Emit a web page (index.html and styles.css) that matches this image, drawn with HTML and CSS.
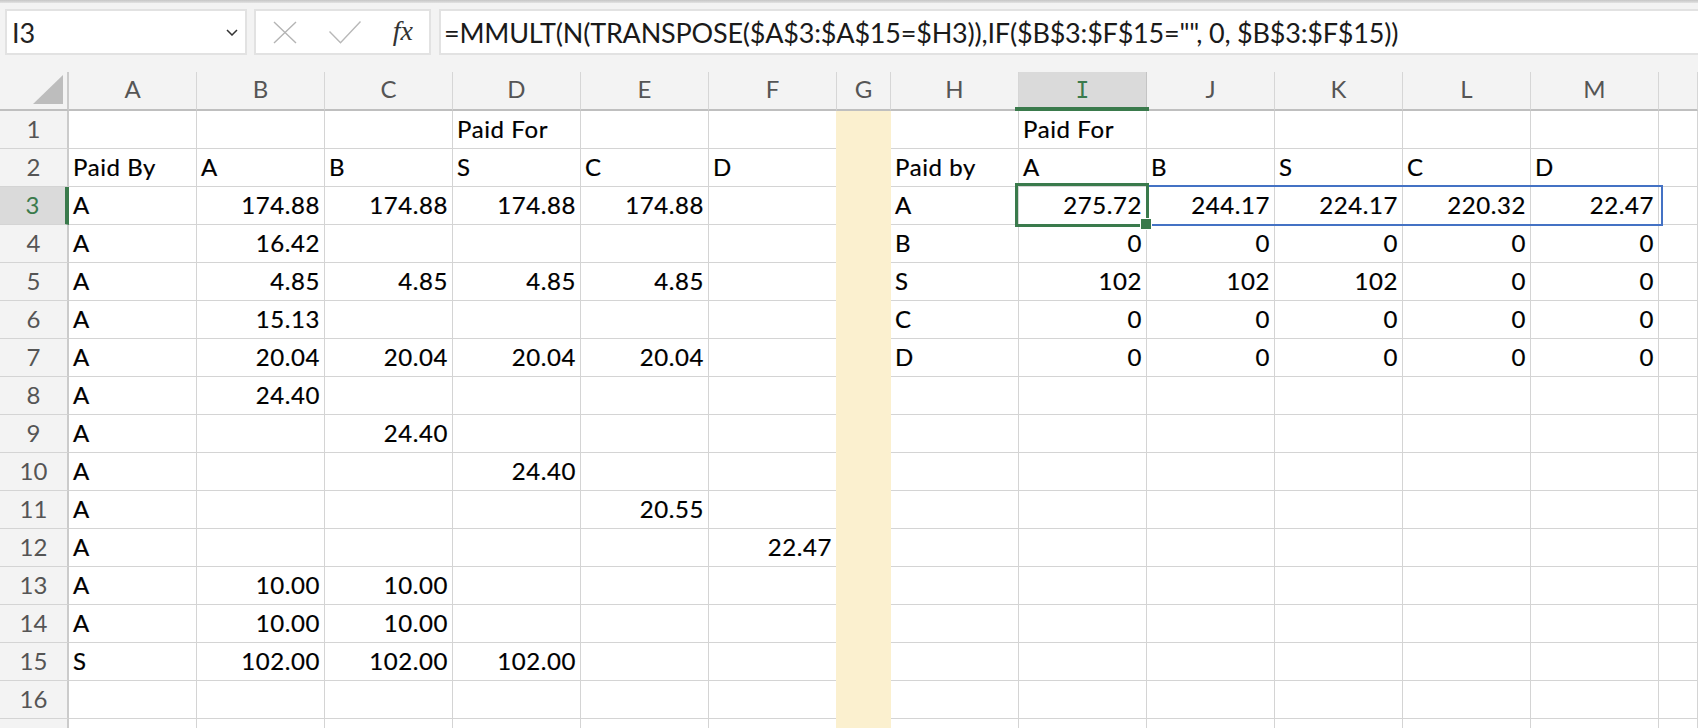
FILE: index.html
```html
<!DOCTYPE html>
<html lang="en">
<head>
<meta charset="utf-8">
<title>Sheet</title>
<link rel="stylesheet" href="styles.css">
</head>
<body>
<div class="toolbar">
  <div class="box namebox">
    <span class="ref">I3</span>
    <svg class="chev" width="12" height="7" viewBox="0 0 12 7"><polyline points="1,1 6,6 11,1" fill="none" stroke="#333" stroke-width="1.5"/></svg>
  </div>
  <div class="box tools">
    <svg width="24" height="23" viewBox="0 0 24 23"><path d="M1 1 L23 22 M23 1 L1 22" stroke="#b4b4b4" stroke-width="1.4" fill="none"/></svg>
    <svg width="32" height="23" viewBox="0 0 32 23"><polyline points="0.5,10.5 11.5,21.8 31.5,0.5" stroke="#b8b8b8" stroke-width="1.4" fill="none"/></svg>
    <span class="fx">fx</span>
  </div>
  <div class="box formula">=MMULT(N(TRANSPOSE($A$3:$A$15=$H3)),IF($B$3:$F$15="", 0, $B$3:$F$15))</div>
</div>

<div class="sheet">
  <div class="row hdr">
    <div class="corner"><svg width="30" height="29" viewBox="0 0 30 29"><polygon points="30,0 30,29 0,29" fill="#bdbdbd"/></svg></div>
    <div class="h">A</div><div class="h">B</div><div class="h">C</div><div class="h">D</div><div class="h">E</div><div class="h">F</div>
    <div class="h">G</div><div class="h">H</div><div class="h on"><span class="serif-i">I</span></div><div class="h">J</div><div class="h">K</div><div class="h">L</div><div class="h">M</div><div class="h"></div>
  </div>

  <div class="row">
    <div class="rh">1</div>
    <div class="c"></div><div class="c"></div><div class="c"></div><div class="c">Paid For</div><div class="c"></div><div class="c"></div>
    <div class="c g"></div>
    <div class="c"></div><div class="c">Paid For</div><div class="c"></div><div class="c"></div><div class="c"></div><div class="c"></div><div class="c"></div>
  </div>
  <div class="row">
    <div class="rh">2</div>
    <div class="c">Paid By</div><div class="c">A</div><div class="c">B</div><div class="c">S</div><div class="c">C</div><div class="c">D</div>
    <div class="c g"></div>
    <div class="c">Paid by</div><div class="c">A</div><div class="c">B</div><div class="c">S</div><div class="c">C</div><div class="c">D</div><div class="c"></div>
  </div>
  <div class="row">
    <div class="rh on">3</div>
    <div class="c">A</div><div class="c n">174.88</div><div class="c n">174.88</div><div class="c n">174.88</div><div class="c n">174.88</div><div class="c"></div>
    <div class="c g"></div>
    <div class="c">A</div><div class="c n sel">275.72</div><div class="c n rng">244.17</div><div class="c n">224.17</div><div class="c n">220.32</div><div class="c n">22.47</div><div class="c"></div>
  </div>
  <div class="row">
    <div class="rh">4</div>
    <div class="c">A</div><div class="c n">16.42</div><div class="c"></div><div class="c"></div><div class="c"></div><div class="c"></div>
    <div class="c g"></div>
    <div class="c">B</div><div class="c n">0</div><div class="c n">0</div><div class="c n">0</div><div class="c n">0</div><div class="c n">0</div><div class="c"></div>
  </div>
  <div class="row">
    <div class="rh">5</div>
    <div class="c">A</div><div class="c n">4.85</div><div class="c n">4.85</div><div class="c n">4.85</div><div class="c n">4.85</div><div class="c"></div>
    <div class="c g"></div>
    <div class="c">S</div><div class="c n">102</div><div class="c n">102</div><div class="c n">102</div><div class="c n">0</div><div class="c n">0</div><div class="c"></div>
  </div>
  <div class="row">
    <div class="rh">6</div>
    <div class="c">A</div><div class="c n">15.13</div><div class="c"></div><div class="c"></div><div class="c"></div><div class="c"></div>
    <div class="c g"></div>
    <div class="c">C</div><div class="c n">0</div><div class="c n">0</div><div class="c n">0</div><div class="c n">0</div><div class="c n">0</div><div class="c"></div>
  </div>
  <div class="row">
    <div class="rh">7</div>
    <div class="c">A</div><div class="c n">20.04</div><div class="c n">20.04</div><div class="c n">20.04</div><div class="c n">20.04</div><div class="c"></div>
    <div class="c g"></div>
    <div class="c">D</div><div class="c n">0</div><div class="c n">0</div><div class="c n">0</div><div class="c n">0</div><div class="c n">0</div><div class="c"></div>
  </div>
  <div class="row">
    <div class="rh">8</div>
    <div class="c">A</div><div class="c n">24.40</div><div class="c"></div><div class="c"></div><div class="c"></div><div class="c"></div>
    <div class="c g"></div>
    <div class="c"></div><div class="c"></div><div class="c"></div><div class="c"></div><div class="c"></div><div class="c"></div><div class="c"></div>
  </div>
  <div class="row">
    <div class="rh">9</div>
    <div class="c">A</div><div class="c"></div><div class="c n">24.40</div><div class="c"></div><div class="c"></div><div class="c"></div>
    <div class="c g"></div>
    <div class="c"></div><div class="c"></div><div class="c"></div><div class="c"></div><div class="c"></div><div class="c"></div><div class="c"></div>
  </div>
  <div class="row">
    <div class="rh">10</div>
    <div class="c">A</div><div class="c"></div><div class="c"></div><div class="c n">24.40</div><div class="c"></div><div class="c"></div>
    <div class="c g"></div>
    <div class="c"></div><div class="c"></div><div class="c"></div><div class="c"></div><div class="c"></div><div class="c"></div><div class="c"></div>
  </div>
  <div class="row">
    <div class="rh">11</div>
    <div class="c">A</div><div class="c"></div><div class="c"></div><div class="c"></div><div class="c n">20.55</div><div class="c"></div>
    <div class="c g"></div>
    <div class="c"></div><div class="c"></div><div class="c"></div><div class="c"></div><div class="c"></div><div class="c"></div><div class="c"></div>
  </div>
  <div class="row">
    <div class="rh">12</div>
    <div class="c">A</div><div class="c"></div><div class="c"></div><div class="c"></div><div class="c"></div><div class="c n">22.47</div>
    <div class="c g"></div>
    <div class="c"></div><div class="c"></div><div class="c"></div><div class="c"></div><div class="c"></div><div class="c"></div><div class="c"></div>
  </div>
  <div class="row">
    <div class="rh">13</div>
    <div class="c">A</div><div class="c n">10.00</div><div class="c n">10.00</div><div class="c"></div><div class="c"></div><div class="c"></div>
    <div class="c g"></div>
    <div class="c"></div><div class="c"></div><div class="c"></div><div class="c"></div><div class="c"></div><div class="c"></div><div class="c"></div>
  </div>
  <div class="row">
    <div class="rh">14</div>
    <div class="c">A</div><div class="c n">10.00</div><div class="c n">10.00</div><div class="c"></div><div class="c"></div><div class="c"></div>
    <div class="c g"></div>
    <div class="c"></div><div class="c"></div><div class="c"></div><div class="c"></div><div class="c"></div><div class="c"></div><div class="c"></div>
  </div>
  <div class="row">
    <div class="rh">15</div>
    <div class="c">S</div><div class="c n">102.00</div><div class="c n">102.00</div><div class="c n">102.00</div><div class="c"></div><div class="c"></div>
    <div class="c g"></div>
    <div class="c"></div><div class="c"></div><div class="c"></div><div class="c"></div><div class="c"></div><div class="c"></div><div class="c"></div>
  </div>
  <div class="row">
    <div class="rh">16</div>
    <div class="c"></div><div class="c"></div><div class="c"></div><div class="c"></div><div class="c"></div><div class="c"></div>
    <div class="c g"></div>
    <div class="c"></div><div class="c"></div><div class="c"></div><div class="c"></div><div class="c"></div><div class="c"></div><div class="c"></div>
  </div>
  <div class="row">
    <div class="rh">17</div>
    <div class="c"></div><div class="c"></div><div class="c"></div><div class="c"></div><div class="c"></div><div class="c"></div>
    <div class="c g"></div>
    <div class="c"></div><div class="c"></div><div class="c"></div><div class="c"></div><div class="c"></div><div class="c"></div><div class="c"></div>
  </div>
</div>
</body>
</html>
```

FILE: styles.css
```css
* { box-sizing: border-box; }

html, body {
  margin: 0;
  height: 728px;
  overflow: hidden;
  background: #fff;
}

body {
  font-family: Lato, "Open Sans", sans-serif;
  color: #000;
}

/* ---------- formula bar ---------- */
.toolbar {
  height: 72px;
  display: flex;
  align-items: flex-start;
  padding: 9px 0 0 5px;
  background: linear-gradient(#c6c6c6, #e2e2e2 3px, #f3f3f3 3px);
}

.box {
  height: 46px;
  background: #fff;
  border: 2px solid #e2e2e2;
  display: flex;
  align-items: center;
}

.namebox {
  width: 242px;
  padding: 0 7px 0 5px;
  justify-content: space-between;
}

.ref {
  font-size: 27px;
  color: #222;
}

.tools {
  width: 177px;
  margin-left: 7px;
  padding: 0 16px 0 17px;
  justify-content: space-between;
}

.fx {
  font-family: "Liberation Serif", "DejaVu Serif", serif;
  font-style: italic;
  font-size: 28px;
  color: #333;
  line-height: 1;
  margin-top: -2px;
}

.formula {
  flex: 1;
  margin-left: 8px;
  margin-right: -10px;
  padding-left: 3px;
  font-size: 27px;
  letter-spacing: -0.2px;
  color: #1a1a1a;
  white-space: nowrap;
  overflow: hidden;
}

/* ---------- grid ---------- */
.row {
  display: grid;
  grid-template-columns: 69px repeat(6, 128px) 54px repeat(6, 128px) 1fr;
  height: 38px;
}

.row.hdr {
  height: 39px;
  background: #f3f3f3;
}

.corner {
  display: flex;
  justify-content: flex-end;
  align-items: flex-end;
  padding: 0 4px 5px 0;
  border-right: 2px solid #cbcbcb;
  border-bottom: 2px solid #bfbfbf;
}

.h {
  border-right: 1px solid #d6d6d6;
  border-bottom: 2px solid #bfbfbf;
  text-align: center;
  color: #555;
  font-size: 24px;
  line-height: 33px;
}

.h.on {
  position: relative;
  background: #dadada;
  color: #3a7a4c;
  border-right-color: #c4c4c4;
}

.h.on::after {
  content: "";
  position: absolute;
  left: -4px;
  right: -3px;
  bottom: -2px;
  height: 4px;
  background: #3a7a4c;
}

.serif-i {
  font-family: "DejaVu Sans Mono", monospace;
  font-size: 23px;
}

.rh {
  background: #f3f3f3;
  border-right: 2px solid #cbcbcb;
  border-bottom: 1px solid #d4d4d4;
  text-align: center;
  color: #555;
  font-size: 24px;
  line-height: 35px;
}

.rh.on {
  background: #dadada;
  color: #3a7a4c;
  border-right: 4px solid #3a7a4c;
}

.c {
  border-right: 1px solid #d4d4d4;
  border-bottom: 1px solid #d4d4d4;
  padding: 0 4px 0 4px;
  font-size: 24px;
  line-height: 35px;
  letter-spacing: 0.6px;
  white-space: nowrap;
  -webkit-text-stroke: 0.2px #000;
}

.n { text-align: right; }

.g {
  background: #fbf0cf;
  border-color: #fbf0cf;
  box-shadow: -1px 0 0 #fbf0cf;
}

/* active cell */
.sel { position: relative; }

.sel::before {
  content: "";
  position: absolute;
  left: -4px;
  right: -3px;
  top: -4px;
  bottom: -3px;
  border: 3px solid #3a7a4c;
  z-index: 3;
}

.sel::after {
  content: "";
  position: absolute;
  right: -6px;
  bottom: -6px;
  width: 10px;
  height: 10px;
  background: #3a7a4c;
  border: 1px solid #fff;
  z-index: 4;
}

/* spill range outline */
.rng { position: relative; }

.rng::before {
  content: "";
  position: absolute;
  left: 0;
  top: -2px;
  bottom: -2px;
  width: 512px;
  border: 2px solid #4472c4;
  z-index: 2;
}
```
